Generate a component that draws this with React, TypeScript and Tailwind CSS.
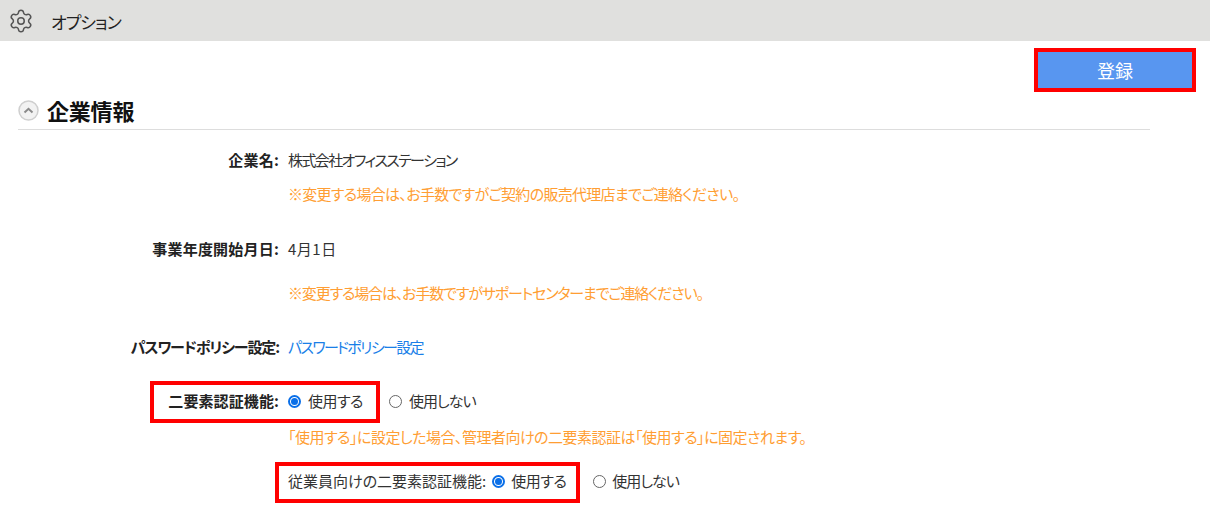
import { Settings } from "lucide-react";

const font = { fontFamily: '"Noto Sans CJK JP", "Noto Sans", sans-serif' };

function Radio({ checked, className = "" }: { checked?: boolean; className?: string }) {
  return checked ? (
    <span className={`w-[13px] h-[13px] rounded-full border-2 border-[#0a6fe8] bg-white flex items-center justify-center shrink-0 ${className}`}>
      <span className="w-[7px] h-[7px] rounded-full bg-[#0a6fe8]" />
    </span>
  ) : (
    <span className={`block w-[13px] h-[13px] rounded-full border border-[#666666] bg-white shrink-0 ${className}`} />
  );
}

function Row({ label, h, children, labelClass = "" }: { label?: string; h: string; children: React.ReactNode; labelClass?: string }) {
  return (
    <div className={`flex items-center ${h}`}>
      <div className={`w-[279px] shrink-0 text-right font-bold text-[15px] text-[#222222] ${labelClass}`}>{label}</div>
      <div className="ml-[9px] flex items-center text-[15px] text-[#333333]">{children}</div>
    </div>
  );
}

const note = "text-[15px] text-[#ff9e33]";
const yes = "tracking-[-0.5px]";
const no = "tracking-[-1px]";

export default function App() {
  return (
    <div style={font} className="relative w-[1210px] h-[508px] bg-white overflow-hidden [font-feature-settings:'palt']">
      <header className="h-[41px] bg-[#e0e0de] flex items-center pl-[8px]">
        <Settings className="w-[26px] h-[26px] text-[#555555]" strokeWidth={1.4} />
        <span className="ml-[17px] mt-[3px] text-[17px] tracking-[-1px] text-[#222222]">オプション</span>
      </header>

      <div className="flex justify-end pr-[18px] pt-[11px]">
        <button className="w-[154px] h-[36px] bg-[#5896f0] text-white text-[18px]">登録</button>
      </div>

      <section className="ml-[18px] mr-[60px] mt-[3px] h-[39px] flex items-center gap-[8px] border-b border-[#dddddd]">
        <svg width="21" height="21" viewBox="0 0 21 21" className="shrink-0">
          <circle cx="10.5" cy="10.5" r="9.5" fill="#f2f2f2" stroke="#cfcfcf" strokeWidth="1.5" />
          <path d="M6.5 12.5 L10.5 8.8 L14.5 12.5" fill="none" stroke="#8a8a8a" strokeWidth="2" />
        </svg>
        <h2 className="text-[22px] font-bold text-[#111111] leading-none tracking-[-0.2px]">企業情報</h2>
      </section>

      <Row label="企業名:" h="h-[36px] mt-[12px]" labelClass="tracking-[0.2px]">
        <span className="tracking-[-1.6px]">株式会社オフィスステーション</span>
      </Row>
      <Row h="h-[32px]">
        <span className={`${note} tracking-[-0.7px]`}>※変更する場合は、お手数ですがご契約の販売代理店までご連絡ください。</span>
      </Row>
      <Row label="事業年度開始月日:" h="h-[38px] mt-[20px]" labelClass="tracking-[0.2px]">
        <span className="tracking-[0.5px]">4月1日</span>
      </Row>
      <Row h="h-[32px] mt-[9px]">
        <span className={`${note} tracking-[-1.15px]`}>※変更する場合は、お手数ですがサポートセンターまでご連絡ください。</span>
      </Row>
      <Row label="パスワードポリシー設定:" h="h-[38px] mt-[19px]" labelClass="tracking-[-1.1px]">
        <span className="text-[#1a7fe8] tracking-[-1.65px]">パスワードポリシー設定</span>
      </Row>
      <Row label="二要素認証機能:" h="h-[38px] mt-[16px]" labelClass="tracking-[0.1px]">
        <Radio checked />
        <span className={`ml-[7px] ${yes}`}>使用する</span>
        <Radio className="ml-[26px]" />
        <span className={`ml-[7px] ${no}`}>使用しない</span>
      </Row>
      <Row h="h-[34px]">
        <span className={`${note} tracking-[-0.5px]`}>「使用する」に設定した場合、管理者向けの二要素認証は「使用する」に固定されます。</span>
      </Row>
      <Row h="h-[38px] mt-[8px]">
        <span>従業員向けの二要素認証機能:</span>
        <Radio checked className="ml-[6px]" />
        <span className={`ml-[6px] ${yes}`}>使用する</span>
        <Radio className="ml-[27px]" />
        <span className={`ml-[6px] ${no}`}>使用しない</span>
      </Row>

      <div className="absolute left-[1034px] top-[48px] w-[162px] h-[44px] border-4 border-[#ff0000]" />
      <div className="absolute left-[150px] top-[381px] w-[230px] h-[42px] border-4 border-[#ff0000]" />
      <div className="absolute left-[275px] top-[462px] w-[305px] h-[41px] border-4 border-[#ff0000]" />
    </div>
  );
}
